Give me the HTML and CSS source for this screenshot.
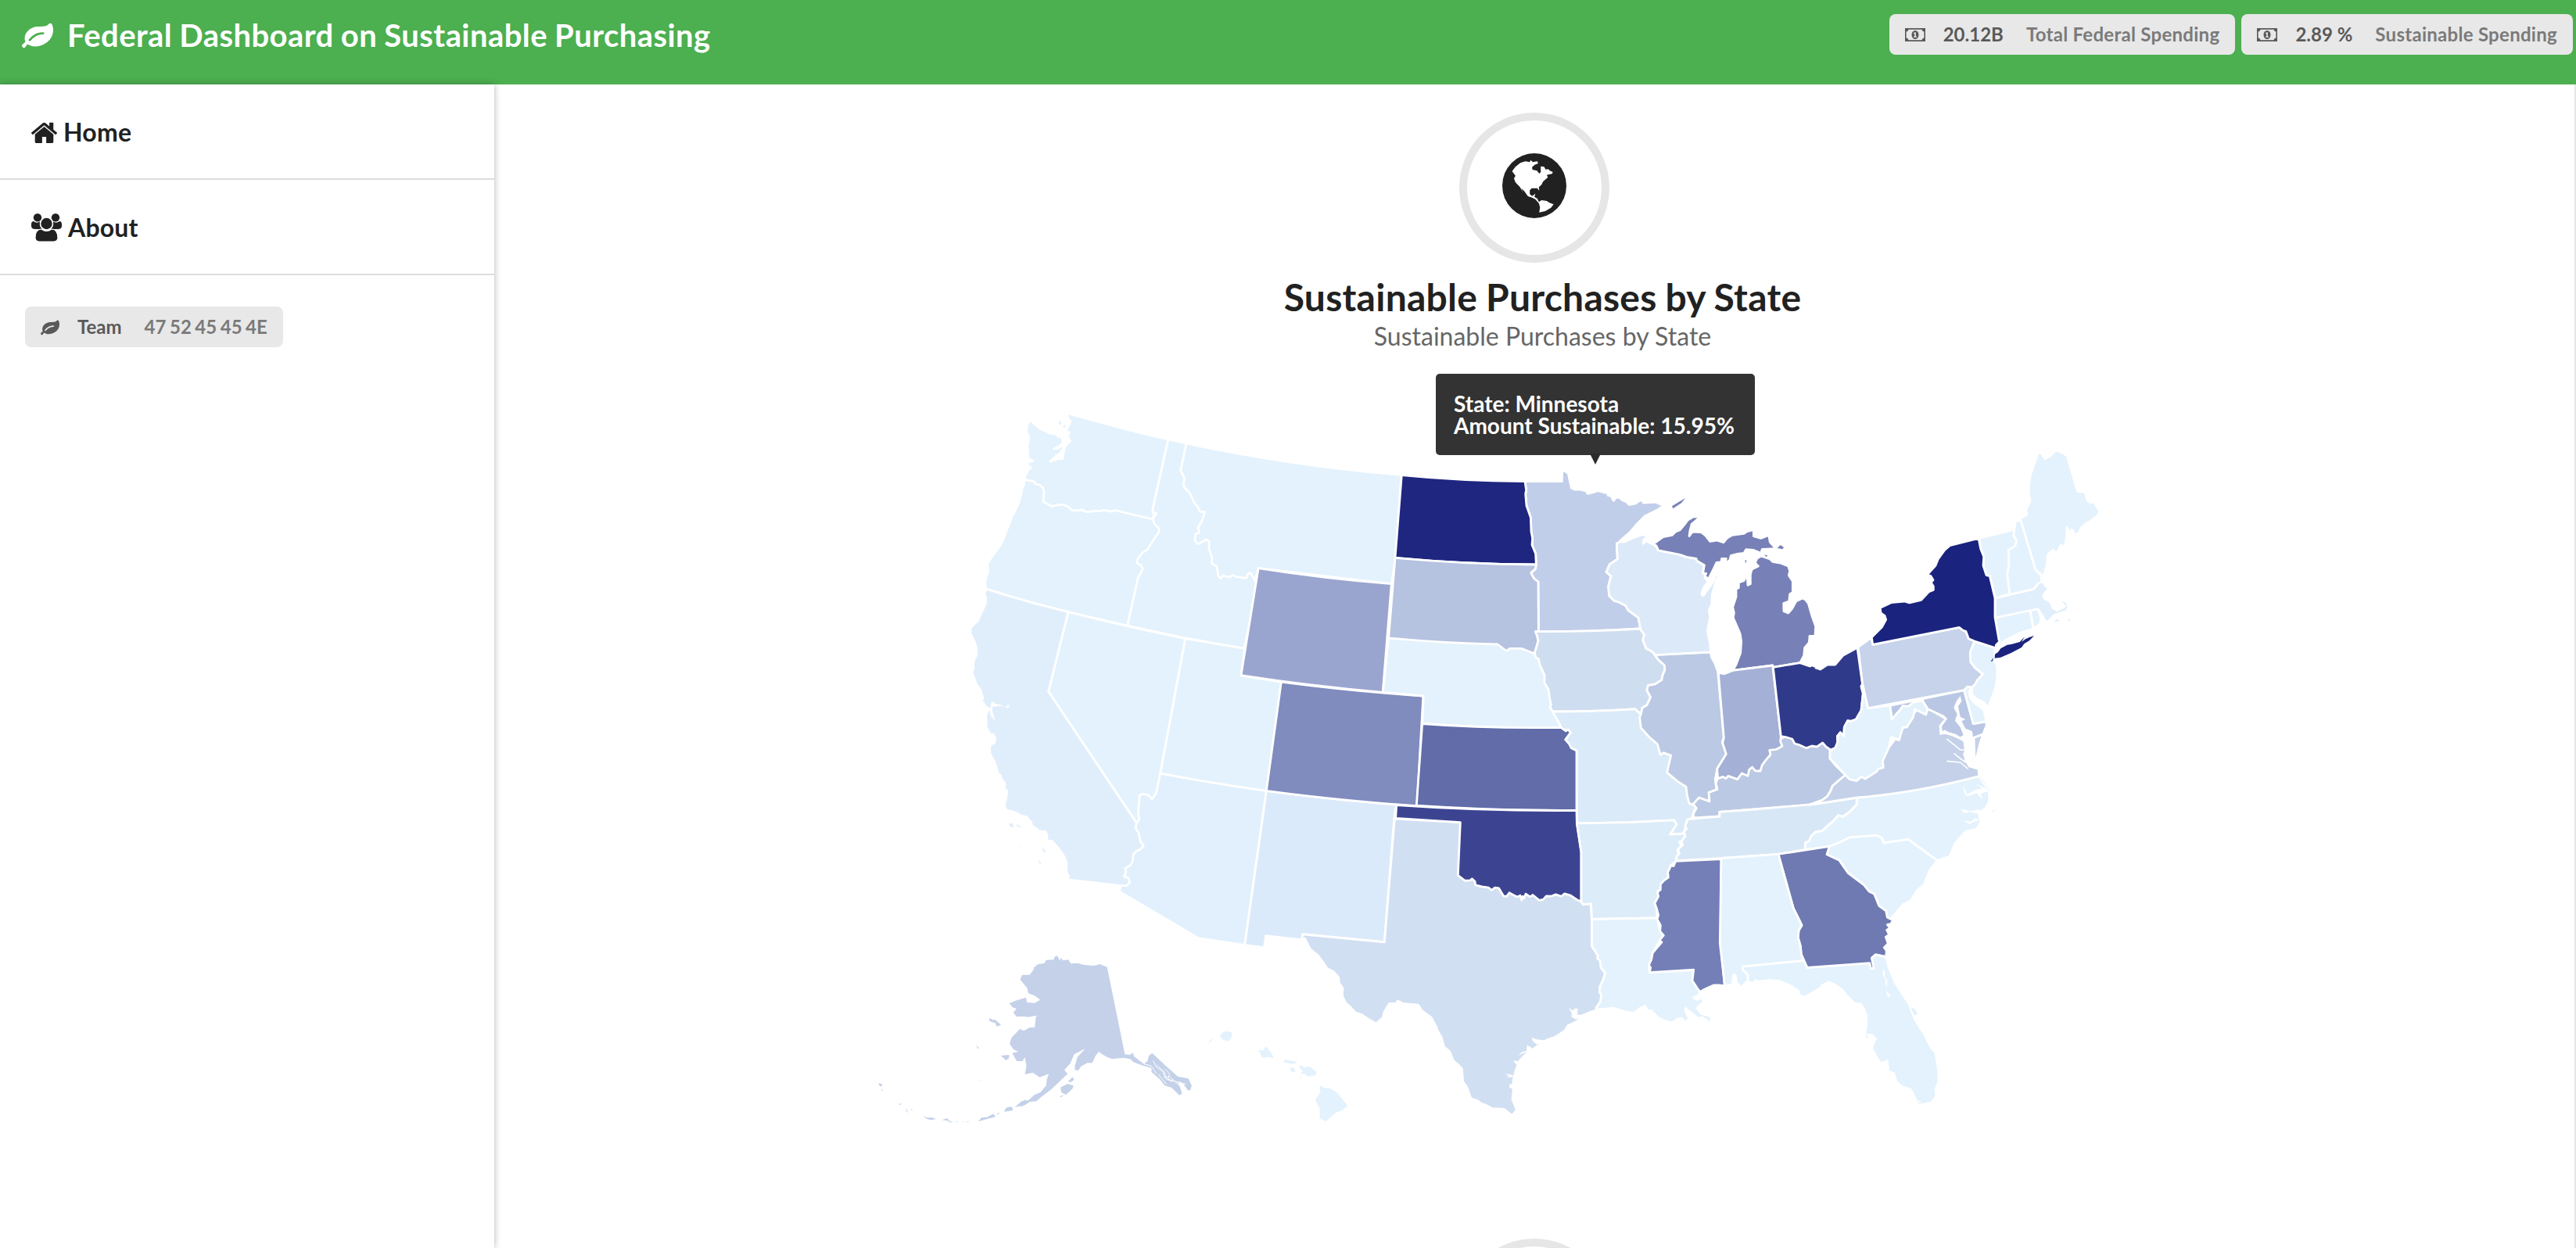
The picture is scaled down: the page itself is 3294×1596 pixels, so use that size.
FILE: index.html
```html
<!DOCTYPE html>
<html lang="en">
<head>
<meta charset="utf-8">
<title>Federal Dashboard on Sustainable Purchasing</title>
<link rel="stylesheet" href="styles.css">
</head>
<body>
<svg class="defs" width="0" height="0" aria-hidden="true">
  <symbol id="leaf" viewBox="0 0 1792 1792"><path d="M1280 832q0-26-19-45t-45-19q-172 0-318 49.500t-259.500 134-235.500 219.500q-19 21-19 45 0 26 19 45t45 19q24 0 45-19 27-24 74-71t67-66q137-124 268.500-176t313.500-52q26 0 45-19t19-45zM1792 638q0 95-20 193-46 224-184.500 383t-357.500 268q-214 108-438 108-148 0-286-47-15-5-88-42t-96-37q-16 0-39.500 32t-45 70-52.500 70-60 32q-43 0-63.500-17.500t-45.500-59.500q-2-4-6-11t-5.500-10-3-9.500-1.500-13.500q0-35 31-73.500t68-65.500 68-56 31-48q0-4-14-38t-16-44q-9-51-9-104 0-115 43.500-220t119-184.500 170.500-139 204-95.500q55-18 145-25.500t179.500-9 178.500-6 163.500-24 113.500-56.500l29.500-29.500 29.500-28 27-20 36.500-16 43.500-4.500q39 0 70.500 46t47.500 112 24 124 8 96z"/></symbol>
  <symbol id="money" viewBox="0 0 26 17"><path fill-rule="evenodd" d="M0 0H26V17H0ZM4.500 1.700A3.200 3.200 0 0 1 1.600 4.500V12.500A3.200 3.200 0 0 1 4.500 15.300H21.500A3.200 3.200 0 0 1 24.400 12.500V4.500A3.200 3.200 0 0 1 21.500 1.700Z"/><path fill-rule="evenodd" d="M13 3a4.500 5.500 0 1 1 0 11a4.500 5.500 0 1 1 0-11ZM12.500 5.200L10.800 6.600L11.500 7.500L12.200 7V10.600H11V11.700H15V10.600H13.800V5.200Z"/></symbol>
</svg>

<header class="topbar">
  <h1 class="brand"><svg class="brand-icon"><use href="#leaf"/></svg>Federal Dashboard on Sustainable Purchasing</h1>
  <div class="stats">
    <div class="label"><svg class="money"><use href="#money"/></svg>20.12B<span class="detail">Total Federal Spending</span></div>
    <div class="label"><svg class="money"><use href="#money"/></svg>2.89 %<span class="detail">Sustainable Spending</span></div>
  </div>
</header>

<div class="shell">
  <nav class="sidebar">
    <a class="item home"><svg class="home-icon" viewBox="90 220 1612 1320" preserveAspectRatio="none"><path d="M1472 992v480q0 26-19 45t-45 19h-384v-384h-256v384h-384q-26 0-45-19t-19-45v-480q0-1 .5-3t.5-3l575-474 575 474q1 2 1 6zm223-69l-62 74q-8 9-21 11h-3q-13 0-21-7l-692-577-692 577q-12 8-24 7-13-2-21-11l-62-74q-8-10-7-23.500t11-21.500l719-599q32-26 76-26t76 26l244 204v-195q0-14 9-23t23-9h192q14 0 23 9t9 23v408l219 182q10 8 11 21.500t-7 23.500z"/></svg>Home</a>
    <a class="item about"><svg class="about-icon" viewBox="0 0 39 36"><circle cx="8" cy="5.200" r="5.200"/><circle cx="31" cy="5.200" r="5.200"/><path d="M0 14Q0 10 3 10Q7 13 11 10.500Q10 17 14 20H5Q0 20 0 16ZM39 14Q39 10 36 10Q32 13 28 10.500Q29 17 25 20H34Q39 20 39 16Z"/><circle class="halo" cx="19.500" cy="13" r="7.800"/><path class="halo" d="M13 20Q19.500 25 26 20Q34 20 34 32Q33 36 29 36H10Q6 36 5 32Q5 20 13 20Z"/></svg>About</a>
    <div class="team"><div class="label"><svg class="team-icon"><use href="#leaf"/></svg>Team<span class="detail code">47 52 45 45 4E</span></div></div>
  </nav>

  <main class="content">
    <div class="ring"><svg class="globe" viewBox="662 228 170 249" preserveAspectRatio="none"><ellipse cx="747" cy="352.500" rx="85" ry="124.500"/><path class="land" d="M688 297L697 280L710 265L723 259L735 262L737 254L743 262L755 259L757 267L748 272L741 281L742 291L754 295L760 306L764 300L764 278L773 280L777 290L784 289L788 295L796 300L794 307L784 310L780 312L783 320L777 328L770 337L766 349L759 358L760 372L755 362L740 362L735 370L735 385L741 392L750 383L747 395L755 402L759 415L766 408L780 411L786 417L798 424L791 437L776 450L760 455L762 435L759 420L750 405L741 398L730 393L720 373L713 363L717 378L709 358L697 340L693 325L697 314Z"/></svg></div>
    <h2 class="title">Sustainable Purchases by State</h2>
    <p class="subtitle">Sustainable Purchases by State</p>

    <div class="map-wrap">
      <svg class="map" viewBox="1100 500 1620 960">
        <g transform="translate(1220 500) scale(.36990 .33333)">
          <path d="M740 186L803 201L900 500L1060 690L1003 988L800 948L599 900L640 600L686 455Z"/>
          <path d="M243 332L300 350L700 470L687 492L692 508L708 527L709 540L690 570L678 590L670 607L652 620L636 642L632 660L645 668L652 680L645 700L637 712L599 900L395 848L250 806L110 759L108 745L109 722L118 690L115 665L125 645L160 592L172 565L180 540L192 508L200 480L208 468L225 425L232 395L236 368L243 360Z"/>
          <path d="M263 110L275 124L300 147L313 152L330 162L352 166L362 176L372 172L376 196L370 208L345 222L360 219L370 212L380 204L375 225L366 240L350 252L332 270L350 264L360 260L375 260L378 238L385 210L402 192L392 175L398 158L385 158L393 140L403 117L395 105L389 92L394 87L530 128L640 160L740 186L686 455L690 475L687 492L565 460L555 458L543 462L517 457L508 461L485 460L465 464L455 463L443 456L425 459L407 457L395 445L378 436L365 436L338 443L308 424L311 390L308 372L295 360L283 357L275 347L262 344L249 341L243 332L250 318L256 303L266 294L257 290L256 272L273 268L256 258L256 225L254 215L259 178L251 158L252 132Z"/>
          <path class="isle" d="M361 120L370 114L372 122L366 133ZM376 133L385 130L386 140L378 138Z"/>
          <path d="M803 201L783 305L797 335L793 355L795 368L812 388L820 402L832 432L843 445L850 463L867 464L858 495L843 525L848 543L835 550L832 573L843 587L873 569L882 578L881 605L892 640L890 662L908 672L913 710L922 719L930 708L953 715L962 706L975 713L1010 718L1015 703L1024 697L1040 727L1052 680L1512 740L1526 640L1546 322Q1170 288 803 201Z"/>
        </g>
        <g transform="translate(1220 800) scale(.39541 .33333)">
          <path fill="#e1f0fc" d="M667 567Q840 606 1010 634L940 1226L790 1199L534 1020L540 998L520 900L540 760L560 650L630 580Z"/>
          <path d="M369 -52Q560 5 748 50L667 567L653 645L640 666L628 650L610 646L600 651L596 712L598 745L590 757L305 253Z"/>
          <path fill="#e0eefc" d="M103 -141L98 -120L103 -108L102 -85L87 -45L75 -15L70 -12L53 10L53 30L66 62L73 90L72 115L63 135L63 165L58 180L72 225L87 250L93 280L83 290L92 292L102 310L113 320L105 335L103 352L105 370L103 387L117 417L128 418L133 433L130 450L116 460L115 487L133 530L142 567L150 575L153 590L163 602L165 615L158 618L172 635L167 670L162 690L170 710L185 712L207 722L213 728L235 735L248 752L252 768L277 789L295 790L301 803L300 825L317 827L340 858L357 888L364 912L363 945L370 960L368 975L540 998L558 998L568 985L563 968L550 963L556 945L553 932L570 920L577 905L580 878L588 867L603 858L613 845L603 830L597 795L587 778L590 757L305 253L369 -52Q230 -92 103 -141Z"/>
          <path class="water" d="M105 318L117 318L122 290L133 300L148 303L165 312L178 303L178 316L150 308L124 312L124 328L133 367L118 345L116 324Z"/>
          <path class="isle" fill="#e0eefc" d="M177 759L190 760L192 773L183 773ZM201 761L222 774L205 771ZM283 851L295 862L295 870L289 867ZM273 897L283 917L275 912ZM208 850L215 853L211 855Z"/>
          <path d="M748 50L940 88L928 192L1058 216L1010 634Q840 606 667 567Z"/>
          <path fill="#dbeafa" d="M1010 634Q1220 668 1430 687L1423 740L1392 1214L1128 1184L1124 1206L1008 1190L1003 1235L940 1226Z"/>
          <path fill="#808bbe" d="M1058 216Q1290 252 1517 270L1512 378L1497 692Q1240 671 1010 634Z"/>
        </g>
        <g transform="translate(1220 500) scale(.36990 .33333)">
          <path fill="#9aa5cf" d="M1052 680Q1280 720 1512 740L1482 1156Q1230 1132 992 1091Z"/>
        </g>
        <g transform="translate(1750 580) scale(.33333)">
          <path d="M77 708L495 700L635 740L660 760L700 850L720 990L735 1048L760 1070L206 1036L211 930L55 916Z"/>
          <path fill="#c1cee9" d="M600 107L742 107L743 67L755 68L766 77L778 132L790 138L808 138L835 144L840 154L860 150L880 143L905 150L920 153L918 160L930 163L940 181L948 170L960 168L975 180L990 186L1000 197L1025 192L1045 177L1055 189L1100 186L1120 195L1140 195L1110 215L1060 240L1030 270L1005 300L965 335L972 345L952 345L955 405L925 425L912 455L930 470L920 510L923 545L942 565L960 570L985 583L997 602L1035 630L1043 672Q850 684 652 683L651 492L635 480L623 458L640 443L643 426L641 385L627 350L629 325L624 300L622 245L606 200L602 155L605 140Z"/>
          <path fill="#1e2680" d="M127 83Q350 105 600 107L605 140L602 155L606 200L622 245L624 300L629 325L627 350L641 385L643 426Q370 425 102 400Z"/>
          <path fill="#b5c2e0" d="M102 400Q370 425 643 426L640 443L623 458L635 480L651 492L652 683L640 683L647 700L651 718L645 740L637 768L587 748L541 748L532 757L523 753L495 732Q290 728 77 708Z"/>
          <path fill="#cfddf0" d="M640 683L647 700L651 718L645 740L637 765L642 783L652 788L657 810L675 850L675 880L690 905L695 940L700 962L697 975L707 990Q880 990 1022 980L1045 1000L1050 975L1068 965L1082 935L1068 908L1072 890L1100 885L1125 868L1128 850L1137 830L1135 812L1112 792L1098 772L1088 760L1065 748L1052 715L1058 695L1047 680L1042 672Q850 684 652 683Z"/>
        </g>
        <g transform="translate(1750 900) scale(.33333 .34439)">
          <path fill="#daeaf8" d="M697 15L707 29L715 45L733 75L738 88L757 101L775 107L755 133L778 165L798 174L799 444L1000 440L1172 432L1182 448L1157 485L1210 482L1215 460L1222 432L1240 425L1250 395L1258 380L1240 360L1200 200L1060 50L1045 39L1022 20Q880 29 707 29Z"/>
          <path fill="#bcc9e4" d="M1098 -182L1112 -163L1135 -143L1137 -126L1128 -106L1125 -89L1100 -73L1072 -68L1068 -50L1082 -24L1068 5L1050 15L1045 39L1040 50L1045 90L1078 125L1108 150L1120 190L1132 182L1160 192L1145 255L1185 288L1218 308L1222 340L1230 370L1245 375L1268 350L1305 362L1308 335L1335 318L1330 280L1338 240L1372 187L1357 142L1363 125L1340 -118L1330 -147L1315 -174L1312 -192Z"/>
          <path fill="#d1dff2" d="M100 427L352 440L360 600L816 700L816 735L823 746L852 742L856 800L857 900L880 935L878 945L888 955L892 980L908 1000L900 1025L888 1050L886 1072L893 1080L890 1105L873 1130L880 1136L850 1145L820 1158L800 1180L765 1195L752 1215L715 1238L685 1248L650 1270L605 1300L580 1325L565 1360L555 1400L555 1440L552 1470L565 1500L568 1508L553 1527L545 1525L520 1505L475 1503L450 1490L432 1485L420 1475L392 1465L378 1425L362 1403L358 1355L345 1342L325 1325L310 1290L290 1275L280 1240L265 1215L257 1195L240 1165L205 1140L190 1118L130 1113L113 1103L105 1113L80 1113L60 1145L55 1165L30 1188L-5 1169L-24 1155L-50 1147L-69 1127L-88 1111L-101 1084L-99 1057L-113 1036L-115 1016L-134 995L-160 982L-170 966L-195 934L-223 912L-245 871L-257 877L-252 856L61 885Z"/>
          <path class="water" d="M768 1128L785 1140L790 1132L803 1132L800 1155L822 1155L797 1173L778 1162L780 1150ZM625 1240L650 1247L690 1250L645 1265L630 1252ZM608 1268L628 1278L615 1290L572 1306L590 1292L605 1290ZM555 1325L575 1328L568 1342ZM525 1373L555 1380L552 1386L530 1388L538 1382ZM552 1410L540 1415L540 1425L552 1430Z"/>
          <path fill="#616ca9" d="M206 74Q450 92 738 88L757 101L766 96L775 107L755 133L770 150L778 165L798 174L798 396Q490 398 184 378Z"/>
          <path fill="#3c4492" d="M107 376Q450 399 798 396L799 442L816 552L816 735L800 728L775 712L752 705L740 715L718 708L700 715L682 714L670 727L655 730L640 718L630 710L620 717L603 706L597 722L592 715L588 730L582 712L570 717L555 710L540 702L530 715L518 714L500 685L485 683L472 692L460 683L435 679L410 673L408 660L397 650L390 656L370 657L343 637L352 440L104 425Z"/>
          <path fill="#dcecf9" d="M799 444L1000 440L1172 432L1182 448L1157 485L1210 482L1218 490L1203 508L1207 518L1192 512L1200 528L1185 543L1190 560L1182 570L1188 577L1160 600L1155 612L1148 625L1150 645L1135 655L1125 670L1128 685L1110 695L1114 715L1098 740L1105 760L1107 795L857 800L853 742L823 746L816 735L816 552Z"/>
          <path d="M857 800L1107 795L1115 830L1130 860L1115 885L1090 925L1085 950L1075 975L1078 998L1247 988L1242 1028L1260 1055L1272 1070L1265 1082L1247 1092L1262 1100L1272 1090L1287 1105L1260 1130L1275 1150L1310 1160L1317 1172L1295 1193L1297 1175L1280 1165L1265 1168L1240 1150L1215 1130L1218 1148L1230 1165L1218 1185L1200 1168L1185 1170L1165 1185L1130 1175L1110 1165L1085 1140L1070 1138L1060 1122L1042 1130L1020 1148L990 1145L940 1130L880 1136L873 1130L890 1105L893 1080L886 1072L888 1050L900 1025L908 1000L892 980L888 955L878 945L880 935L857 900Z"/>
          <path fill="#747fb7" d="M1178 585L1353 577L1350 885L1366 1047L1345 1045L1325 1045L1290 1060L1272 1070L1260 1055L1242 1028L1247 988L1078 998L1082 980L1075 970L1085 950L1090 925L1105 908L1125 885L1115 880L1132 860L1118 845L1120 822L1107 800L1112 785L1105 760L1098 740L1112 715L1108 700L1120 690L1120 670L1135 655L1150 645L1148 625L1155 612L1160 600L1170 603Z"/>
        </g>
        <g transform="translate(2100 980) scale(.33333)">
          <path fill="#bcc9e4" d="M200 198L297 192L296 175L430 165L640 148L690 130L710 115L722 95L730 75L765 45L780 33L745 0L720 -30L722 -60L700 -90L560 -120L480 -80L400 -5L300 20L290 45L282 65L288 88L255 100L258 135L218 120L195 145L208 160L195 185Z"/>
          <path fill="#d8e7f6" d="M130 362L300 353L522 337L625 320L626 293L640 288L648 268L665 252L690 248L735 208L752 188L770 193L795 175L822 148L824 120L660 145L430 165L296 175L297 192L175 203L165 228L170 240L160 250L165 268L150 288L155 302L138 318L142 335L132 345Z"/>
          <path d="M824 120Q1050 102 1292 38L1310 65L1330 100L1332 130L1318 160L1290 180L1300 212L1283 240L1240 250L1200 295L1180 345L1132 362L1020 280L928 294L918 275L900 265L795 273L755 293L718 307L625 320L626 293L640 288L648 268L665 252L690 248L735 208L752 188L770 193L795 175L822 148Z"/>
          <path class="water" d="M1230 75L1240 90L1245 108L1280 90L1305 85L1275 65L1310 80L1325 95L1300 105L1305 130L1285 103L1250 115L1238 110ZM1222 163L1260 172L1295 165L1290 182L1255 175L1235 180ZM1230 207L1260 212L1275 200L1300 205L1275 212L1255 222Z"/>
          <path class="line-land" d="M1295 38L1325 85L1332 96M1340 175L1357 166"/>
          <path d="M718 307L755 293L795 273L900 265L918 275L928 294L1020 280L1132 362L1105 395L1090 430L1080 455L1055 475L1030 515L1000 530L975 560L950 588L940 575L935 555L908 535L890 490L870 480L850 455L790 410L755 360L708 338Z"/>
          <path d="M385 768L620 745L633 772L872 755L877 775L888 775L880 735L895 722L935 732L945 770L970 830L1025 915L1045 970L1080 1025L1105 1075L1125 1100L1135 1160L1137 1210L1125 1240L1128 1265L1110 1290L1060 1300L1050 1292L1048 1275L1030 1240L995 1228L975 1210L965 1178L945 1170L940 1130L915 1140L895 1110L880 1080L895 1045L880 1030L865 1030L872 1055L853 1045L860 985L860 955L850 930L838 912L815 910L780 875L770 860L740 838L715 828L690 840L685 850L625 885L605 882L600 862L570 842L530 825L490 820L430 828L405 830L405 800L385 780Z"/>
          <path class="water" d="M922 780L930 785L932 808L940 820L938 848L932 835L934 820L924 800ZM934 862L950 875L950 890L940 880ZM1022 925L1030 930L1045 960L1035 950ZM1052 1280L1072 1287L1062 1292ZM428 812L436 818L446 820L432 826Z"/>
          <path class="isle" d="M1030 922L1050 935L1056 952L1042 955Z"/>
          <path fill="#6f7ab2" d="M522 337L718 307L708 338L755 360L790 410L850 455L870 480L890 490L908 535L935 555L940 580L962 590L953 605L940 607L950 620L938 628L947 645L934 655L943 680L928 695L937 708L935 730L895 722L880 735L888 775L877 775L872 755L633 772L610 722L607 690L598 658L600 630L612 610L600 585L580 545Z"/>
          <path d="M303 352L522 337L580 545L600 585L612 610L600 630L598 658L607 690L610 722L620 745L385 768L385 780L405 800L405 822L380 848L360 850L375 842L362 830L357 800L350 800L345 838L317 843L298 680Z"/>
        </g>
        <g transform="translate(1750 580) scale(.33333)">
          <path fill="#dce9f8" d="M965 338L952 345L955 405L925 425L912 455L930 470L920 510L923 545L942 565L960 570L985 583L997 602L1035 630L1043 672L1047 680L1058 695L1052 715L1065 748L1088 760L1100 773L1312 762L1310 730L1300 680L1310 630L1306 600L1316 580L1318 540L1332 490L1345 462L1330 468L1322 490L1312 507L1302 520L1285 545L1277 540L1285 515L1303 490L1290 478L1296 462L1282 460L1288 430L1260 412L1257 403L1220 397L1195 388L1112 372L1100 352L1082 345L1065 335L1053 346L1056 330L1073 320L1052 310L1020 322L980 340Z"/>
        </g>
        <g transform="translate(2050 620) scale(.33333)">
          <path fill="#7781b7" d="M497 712L650 693L652 700L755 683L770 655L773 625L790 605L792 580L813 580L815 543L800 500L787 455L775 440L765 435L740 447L725 475L710 492L693 485L692 455L713 447L716 420L727 412L727 370L712 348L716 330L710 312L700 308L680 300L650 295L640 285L605 273L590 283L583 300L595 312L570 325L565 345L565 380L555 385L552 345L540 368L520 375L520 395L510 400L510 430L497 470L502 490L499 510L525 570L530 600L527 645L510 690Z"/>
          <path fill="#7781b7" d="M195 225L230 200L265 193L278 180L295 173L310 155L325 135L345 123L372 122L355 138L340 150L333 175L330 197L343 180L375 182L390 192L410 217L435 213L462 221L475 205L495 193L540 187L550 180L577 173L577 197L605 205L635 193L640 220L662 245L610 247L605 262L575 250L548 248L540 262L515 265L490 272L485 290L467 300L472 283L455 283L452 297L435 298L420 330L405 360L390 352L395 340L383 340L388 308L360 292L357 283L320 277L295 268L212 252L205 236Z"/>
          <path class="isle" fill="#7781b7" d="M264 82L290 66L316 51L300 70L268 91ZM668 243L680 231L693 240L688 247ZM544 287L550 291L547 302ZM618 268L632 272L625 276Z"/>
          <path fill="#a5b0d6" d="M442 722L465 725L497 712L650 693L682 965L680 985L687 1003L665 1015L638 1018L642 1035L625 1055L610 1075L603 1098L583 1097L572 1083L560 1093L555 1117L532 1107L515 1130L480 1117L470 1127L460 1120L440 1127L437 1090L472 1033L458 990L463 970Z"/>
          <path fill="#303a8a" d="M652 700L755 683L790 695L810 700L833 708L860 690L890 690L920 655L975 625L995 768L990 772L997 800L990 865L970 900L950 907L938 905L925 930L923 965L910 950L898 965L900 990L890 1010L875 1018L855 1005L842 990L820 1005L800 1002L780 1010L750 997L735 993L725 975L700 968L682 965Z"/>
          <path class="isle" fill="#303a8a" d="M789 707L800 697L815 702L802 708Z"/>
        </g>
        <g transform="translate(2350 560) scale(.33333)">
          <path fill="#c4d1e9" d="M-110 1408L74 1380Q300 1362 542 1298L540 1270L505 1260L490 1235L490 1200L485 1160L445 1142L410 1130L395 1135L393 1105L415 1078L355 1043L325 1015L290 1060L150 1250L80 1290L30 1293L15 1305L-20 1335L-28 1355L-40 1375L-60 1390Z"/>
          <path fill="#bac7e4" d="M200 1027L485 968L520 1097L570 1088L570 1105L557 1137L525 1150L520 1165L490 1165L450 1140L425 1133L410 1125L398 1133L395 1105L415 1078L405 1068L360 1047L345 1040L325 1008L290 1060L208 1080Z"/>
          <path fill="#c4d1e9" d="M557 1137L545 1175L532 1230L525 1235L522 1150Z"/>
          <path d="M95 942L116 1037L200 1027L208 1080L222 1062L238 1045L250 1028L270 1030L290 1015L325 1008L345 1040L338 1062L295 1040L290 1070L265 1110L250 1110L235 1160L205 1148L195 1190L172 1240L175 1265L155 1270L150 1280L105 1308L90 1300L72 1316L45 1310L-30 1230L-30 1198L-10 1190L0 1165L-2 1145L10 1130L23 1145L25 1110L38 1085L50 1087L70 1080L90 1045L97 980L90 955Z"/>
          <path class="water" d="M470 990L475 1010L462 1030L470 1070L490 1080L475 1087L490 1115L515 1125L520 1150L525 1180L528 1255L540 1268L510 1262L490 1235L480 1215L490 1190L488 1160L465 1150L482 1140L470 1110L450 1085L458 1060L445 1035L455 1010Z"/>
          <path class="river" d="M418 1155L470 1197L490 1197M445 1210L490 1245M418 1240L470 1245L500 1270M393 1132L450 1138L480 1160"/>
          <path fill="#c6d3ea" d="M78 803L130 765L134 793L466 727L480 738L492 743L502 770L525 780L508 822L510 860L525 880L557 907L535 930L528 945L515 957L497 955L485 968L116 1037L95 942Z"/>
          <path d="M485 968L497 955L513 957L503 975L510 1000L525 1018L560 1043L570 1088L520 1097Z"/>
          <path d="M525 780L602 805L603 860L610 870L612 915L605 960L590 1000L578 1035L560 1015L530 1000L515 985L515 957L528 945L535 930L557 907L525 880L510 860L508 822Z"/>
          <path d="M543 385L677 352L675 375L686 395L680 415L655 430L657 490L650 520L660 598L605 615L583 530L570 527L558 490L560 455L548 425Z"/>
          <path d="M677 352L682 322L692 318L700 310L760 508L780 527L783 555L752 580L660 600L650 520L657 490L655 430L680 415L686 395L675 375Z"/>
          <path d="M700 310L725 295L722 275L738 245L732 205L737 150L768 58L780 58L795 80L815 70L835 48L860 56L879 68L920 206L949 208L957 240L967 248L982 245L1004 280L997 299L967 320L947 332L932 347L927 362L905 377L905 357L897 352L890 364L878 342L878 375L872 415L855 412L840 442L825 430L805 450L802 490L792 520L787 535L775 518L760 508Z"/>
          <path d="M603 690L738 660L750 732L700 748L640 778L622 795L618 775Z"/>
          <path d="M738 662L768 656L780 690L775 715L752 730Z"/>
          <path fill="#e1eefc" d="M605 615L752 580L770 558L787 550L797 570L811 575L787 605L792 615L817 630L824 652L840 662L870 648L873 640L860 622L882 648L880 664L832 679L815 696L800 709L785 682L768 656L603 690Z"/>
          <path class="isle" fill="#e1eefc" d="M858 625L876 633L880 650L870 658L876 645ZM828 707L840 695L851 703ZM880 700L886 694L891 703Z"/>
          <path fill="#1a237e" d="M130 765L170 725L185 697L180 682L165 672L163 652L205 632L255 627L275 633L320 622L350 590L367 583L367 570L358 555L366 545L357 530L343 525L375 490L385 465L410 430L430 413L540 385L548 425L560 455L558 490L570 527L583 530L603 615L603 688L618 775L622 780L607 795L605 845L602 805L525 780L502 770L492 743L480 738L466 727L134 793Z"/>
          <path class="isle" fill="#1a237e" d="M603 830L602 845L625 842L665 825L705 804L715 790L735 778L753 759L735 765L720 772L705 783L717 763L698 783L665 792L650 794L625 808L615 822ZM587 858L597 843L594 856Z"/>
        </g>
        <g transform="translate(1100 1200) scale(.42088 .33333)">
          <path class="isle" fill="#c4d1e9" d="M486 158L492 140L515 140L528 118L528 112L540 100L560 95L565 83L588 82L590 73L596 66L603 75L605 85L612 75L615 85L632 82L640 97L660 95L680 102L710 105L728 99L750 110L804 445L820 447L828 438L832 453L862 482L873 470L877 450L887 440L925 485L965 530L997 538L1007 565L1003 583L995 583L980 555L965 548L978 595L970 602L945 572L925 565L910 540L885 513L885 497L862 490L830 475L820 463L800 458L765 463L750 455L735 445L725 435L715 450L705 478L690 478L672 490L662 507L652 505L652 490L660 455L675 435L683 423L665 435L650 445L638 480L620 505L630 520L605 550L580 580L550 608L535 625L515 627L500 640L470 648L490 625L510 622L530 600L548 590L565 565L567 540L573 520L545 533L525 515L500 522L505 490L500 455L493 472L475 470L462 440L480 435L465 425L454 405L460 380L485 348L497 355L515 342L530 342L533 310L535 296L510 302L500 300L475 300L465 285L475 270L463 265L453 250L475 238L504 227L506 245L530 248L547 236L530 220L510 210L508 192L495 172Z"/>
          <path class="water-line" d="M862 482L885 490L900 520M890 470L900 495L920 510L925 535L940 530L965 560L980 570M900 485L925 515L930 540L950 550M925 500L940 520L935 540L960 550L990 560M905 520L930 560"/>
          <path class="isle" fill="#c4d1e9" d="M608 572L630 558L648 565L645 577L625 600L612 592ZM632 548L645 532L650 543L638 553ZM437 665L443 650L455 646L464 650L462 661ZM359 703L368 688L385 686L405 673L411 685L385 693ZM480 640L500 619L512 630L490 645ZM191 679L200 688L220 688L231 694L212 697L198 690ZM248 697L265 690L268 698L282 706L272 706L265 699ZM55 555L67 560L65 570L58 564ZM64 579L69 583L65 586ZM116 636L127 633L122 639ZM138 647L145 668L141 666ZM154 654L160 659L155 660ZM292 702L298 703L292 706ZM310 703L316 704L312 706ZM323 702L331 703L326 706ZM414 672L425 669L418 676ZM427 450L452 447L452 460L443 468ZM392 305L403 313L410 312L428 332L415 338L410 325L393 318ZM351 410L361 421L358 424ZM606 607L620 600L610 610ZM364 543L368 542L367 546Z"/>
          <path class="isle" d="M1093 375L1100 362L1112 356L1129 361L1128 380L1118 395L1100 388ZM1058 400L1068 384L1069 390L1060 402ZM1210 428L1225 430L1232 414L1248 438L1257 459L1237 455L1222 458ZM1290 465L1329 473L1315 482L1285 475ZM1305 495L1318 497L1323 510L1311 514ZM1335 485L1350 495L1365 492L1387 512L1383 525L1362 530L1350 520L1338 520L1345 508L1335 498ZM1334 535L1342 530L1340 537ZM1396 563L1410 574L1430 577L1450 593L1465 617L1480 641L1465 660L1445 668L1415 702L1396 690L1396 655L1383 620L1398 590Z"/>
        </g>
      </svg>
      <div class="tooltip">State: Minnesota<br>Amount Sustainable: 15.95%</div>
    </div>
    <div class="ring next"></div>
  </main>
</div>
</body>
</html>
```
FILE: styles.css
```css
* { box-sizing: border-box; }
body {
  margin: 0;
  height: 1596px;
  overflow: hidden;
  font-family: Lato, "Liberation Sans", sans-serif;
  color: #212121;
  background: #fff;
}
svg { display: block; flex: none; fill: currentColor; }
.defs { position: absolute; }

.topbar {
  height: 108px;
  padding: 18px 4px 0 28px;
  display: flex;
  justify-content: space-between;
  align-items: flex-start;
  background: #4caf50;
}
.brand {
  margin: 2px 0 0;
  display: flex;
  align-items: center;
  font-size: 40px;
  line-height: 50px;
  font-weight: 700;
  letter-spacing: .43px;
  word-spacing: -1px;
  color: #fff;
}
.brand-icon { width: 40px; height: 40px; margin: 0 18px 3px 0; }
.stats { display: flex; gap: 8px; }

.label {
  height: 52px;
  padding: 0 20px;
  display: inline-flex;
  align-items: center;
  border-radius: 8px;
  background: #e8e8e8;
  color: #595959;
  font-size: 24px;
  line-height: 52px;
  font-weight: 700;
  white-space: nowrap;
}
.label .detail { margin-left: 29px; color: #7a7a7a; letter-spacing: .28px; }
.label .code { letter-spacing: 0; word-spacing: -1.3px; }
.money { width: 26px; height: 17px; margin-right: 23px; }
.team-icon { width: 24px; height: 24px; margin-right: 23px; }

.shell { height: 1488px; display: flex; }
.sidebar {
  width: 632px;
  flex: none;
  box-shadow: 0 0 8px rgba(34, 36, 38, .35);
}
.item {
  height: 122px;
  padding: 2px 0 0 40px;
  display: flex;
  align-items: center;
  gap: 8px;
  border-bottom: 2px solid #dedede;
  font-size: 32px;
  line-height: 40px;
  font-weight: 700;
  letter-spacing: .2px;
}
.home-icon { width: 33px; height: 27px; }
.about-icon { width: 39px; height: 36px; }
.about-icon .halo { stroke: #fff; stroke-width: 1.2; }
.team { padding: 40px 32px; }

.content {
  flex: 1;
  padding: 36px 0 0;
  display: flex;
  flex-direction: column;
  align-items: center;
  border-right: 2px solid #e6e6e6;
  overflow: hidden;
}
.ring {
  width: 192px;
  height: 192px;
  flex: none;
  display: flex;
  justify-content: center;
  padding-top: 42px;
  border: 10px solid #e6e6e6;
  border-radius: 50%;
}
.globe { width: 82px; height: 83px; }
.globe .land { fill: #fff; }
.title {
  margin: 14px 0 0 21px;
  font-size: 48px;
  line-height: 60px;
  font-weight: 700;
  letter-spacing: .25px;
  word-spacing: -1px;
}
.subtitle {
  margin: 0 0 0 21px;
  font-size: 32px;
  line-height: 40px;
  color: #666;
}
.map-wrap { position: relative; margin-top: 50px; width: 1620px; height: 960px; flex: none; left: -52px; }
.map { width: 1620px; height: 960px; fill: #e3f2fd; }
.map path {
  stroke: #fff;
  stroke-width: 2.8px;
  stroke-linejoin: round;
  vector-effect: non-scaling-stroke;
}
.map .isle { stroke: none; }
.map .water { fill: #fff; stroke: none; }
.map .river { fill: none; stroke-width: 1.6px; }
.map .water-line { fill: none; stroke-width: 1px; }
.map .line-land { fill: none; stroke: #e3f2fd; stroke-width: 1px; }

.tooltip {
  position: absolute;
  left: 736px;
  top: -22px;
  width: 408px;
  height: 104px;
  padding: 24px 23px;
  border-radius: 5px;
  background: #333;
  color: #fff;
  font-size: 28px;
  line-height: 28px;
  font-weight: 700;
  white-space: nowrap;
}
.tooltip::after {
  content: "";
  position: absolute;
  left: 197px;
  top: 102px;
  border: 7px solid transparent;
  border-top: 14px solid #2b2b2b;
  border-bottom: 0;
}
.ring.next { margin-top: 124px; }
```
